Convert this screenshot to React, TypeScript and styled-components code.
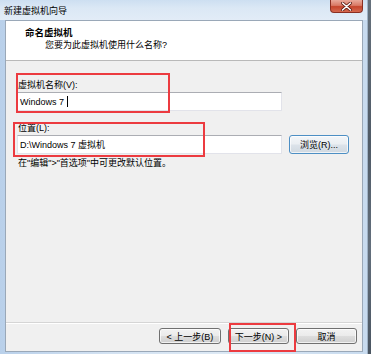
import React from "react";
import styled, { createGlobalStyle } from "styled-components";

const Global = createGlobalStyle`
  html, body { margin: 0; padding: 0; background: #4d5b6b; }
  body { font-family: "Liberation Sans", "Noto Sans CJK SC", sans-serif; }
`;

const Page = styled.div`
  position: relative;
  width: 371px;
  height: 354px;
  overflow: hidden;
  display: flex;
  background: #4d5b6b;
`;

const Win = styled.div`
  width: 367px;
  height: 354px;
  display: flex;
  flex-direction: column;
  background: linear-gradient(90deg, #b9d0ea 0%, #d3e2f2 30%, #dde9f5 60%, #c8dbef 100%);
`;

const Behind = styled.div`
  flex: 1;
  background: linear-gradient(180deg, #66717c 0%, #4f5a66 40%, #636f7c 70%, #4a5561 100%);
  border-left: 1px solid #9fb2c6;
`;

const TitleBar = styled.div`
  height: 20px;
  display: flex;
  align-items: flex-start;
  justify-content: space-between;
  padding-left: 4px;
  background: linear-gradient(180deg, #cddff1 0%, #dbe8f5 40%, #e2ecf7 100%);
`;

const Title = styled.div`
  font-size: 9px;
  line-height: 12px;
  margin-top: 5px;
  color: #000;
`;

const Close = styled.div`
  width: 33px;
  height: 13px;
  margin-right: 4px;
  border: 1px solid #8a2f22;
  border-top: none;
  border-radius: 0 0 4px 4px;
  box-sizing: border-box;
  background: linear-gradient(180deg, #e9a99a 0%, #d97a66 45%, #c5452c 55%, #d5694f 100%);
  display: flex;
  align-items: center;
  justify-content: center;
`;

const Client = styled.div`
  flex: 1;
  margin: 0 4px 2px 5px;
  border: 1px solid #9aa8b8;
  background: #f0f0f0;
  display: flex;
  flex-direction: column;
`;

const Header = styled.div`
  height: 40px;
  background: #ffffff;
  border-bottom: 1px solid #b9b9b9;
  padding: 6px 0 0 19px;
  box-sizing: border-box;
  color: #000;
`;

const HeadTitle = styled.div`
  font-size: 9.5px;
  line-height: 12px;
  font-weight: bold;
`;

const HeadSub = styled.div`
  font-size: 9px;
  line-height: 12px;
  padding-left: 20px;
`;

const Body = styled.div`
  flex: 1;
  padding: 18px 0 0 11px;
  display: flex;
  flex-direction: column;
`;

const Label = styled.div<{ $top?: number }>`
  font-size: 9px;
  line-height: 12px;
  padding-left: 1px;
  margin-top: ${(p) => p.$top ?? 0}px;
  margin-bottom: 1px;
  color: #000;
`;

const Row = styled.div`
  display: flex;
  align-items: center;
  gap: 7px;
`;

const Input = styled.div`
  width: 265px;
  height: 19px;
  box-sizing: border-box;
  background: #fff;
  border: 1px solid #e2e3ea;
  border-top-color: #abadb3;
  display: flex;
  align-items: center;
  padding-left: 2px;
  font-size: 9px;
  color: #000;
  white-space: pre;
`;

const Caret = styled.span`
  display: inline-block;
  width: 1px;
  height: 11px;
  background: #000;
`;

const Note = styled.div`
  font-size: 9px;
  line-height: 12px;
  margin-top: 3px;
  padding-left: 1px;
  color: #000;
`;

const Footer = styled.div`
  height: 29px;
  border-top: 1px solid #d5d5d5;
  box-shadow: inset 0 1px 0 #ffffff;
  display: flex;
  align-items: center;
  justify-content: flex-end;
  gap: 7px;
  padding: 0 5px 2px 0;
  box-sizing: border-box;
`;

const Button = styled.div<{ $w: number; $h?: number; $hot?: boolean }>`
  width: ${(p) => p.$w}px;
  height: ${(p) => p.$h ?? 16}px;
  box-sizing: border-box;
  border: 1px solid ${(p) => (p.$hot ? "#4d8fc4" : "#707070")};
  border-radius: 3px;
  background: ${(p) =>
    p.$hot
      ? "linear-gradient(180deg, #f3f6f9 0%, #eaeef2 48%, #dce3ea 52%, #d0d8e0 100%)"
      : "linear-gradient(180deg, #f2f2f2 0%, #ebebeb 48%, #dddddd 52%, #cfcfcf 100%)"};
  box-shadow: inset 0 0 0 1px rgba(255, 255, 255, 0.7);
  display: flex;
  align-items: center;
  justify-content: center;
  font-size: 9px;
  color: #000;
  white-space: pre;
`;

const Mark = styled.div<{ $x: number; $y: number; $w: number; $h: number }>`
  position: absolute;
  left: ${(p) => p.$x}px;
  top: ${(p) => p.$y}px;
  width: ${(p) => p.$w}px;
  height: ${(p) => p.$h}px;
  box-sizing: border-box;
  border: 2px solid #ec3b40;
  pointer-events: none;
`;

export default function App() {
  return (
    <>
      <Global />
      <Page>
        <Win>
          <TitleBar>
            <Title>新建虚拟机向导</Title>
            <Close>
              <svg width="11" height="9" viewBox="0 0 11 9">
                <path d="M1.5 1 L9.5 8 M9.5 1 L1.5 8" stroke="#5a1a10" strokeWidth="3" strokeLinecap="round" />
                <path d="M1.5 1 L9.5 8 M9.5 1 L1.5 8" stroke="#ffffff" strokeWidth="1.6" strokeLinecap="round" />
              </svg>
            </Close>
          </TitleBar>
          <Client>
            <Header>
              <HeadTitle>命名虚拟机</HeadTitle>
              <HeadSub>您要为此虚拟机使用什么名称?</HeadSub>
            </Header>
            <Body>
              <Label>虚拟机名称(V):</Label>
              <Input>
                {"Windows 7 "}
                <Caret />
              </Input>
              <Label $top={11}>位置(L):</Label>
              <Row>
                <Input>{"D:\\Windows 7 虚拟机"}</Input>
                <Button $w={60} $h={19} $hot>
                  {"浏览(R)..."}
                </Button>
              </Row>
              <Note>{'在"编辑">"首选项"中可更改默认位置。'}</Note>
            </Body>
            <Footer>
              <Button $w={62}>{"< 上一步(B)"}</Button>
              <Button $w={61}>{"下一步(N) >"}</Button>
              <Button $w={61}>取消</Button>
            </Footer>
          </Client>
        </Win>
        <Behind />
        <Mark $x={16} $y={73} $w={154} $h={40} />
        <Mark $x={13} $y={122} $w={192} $h={35} />
        <Mark $x={229} $y={323} $w={67} $h={29} />
      </Page>
    </>
  );
}
